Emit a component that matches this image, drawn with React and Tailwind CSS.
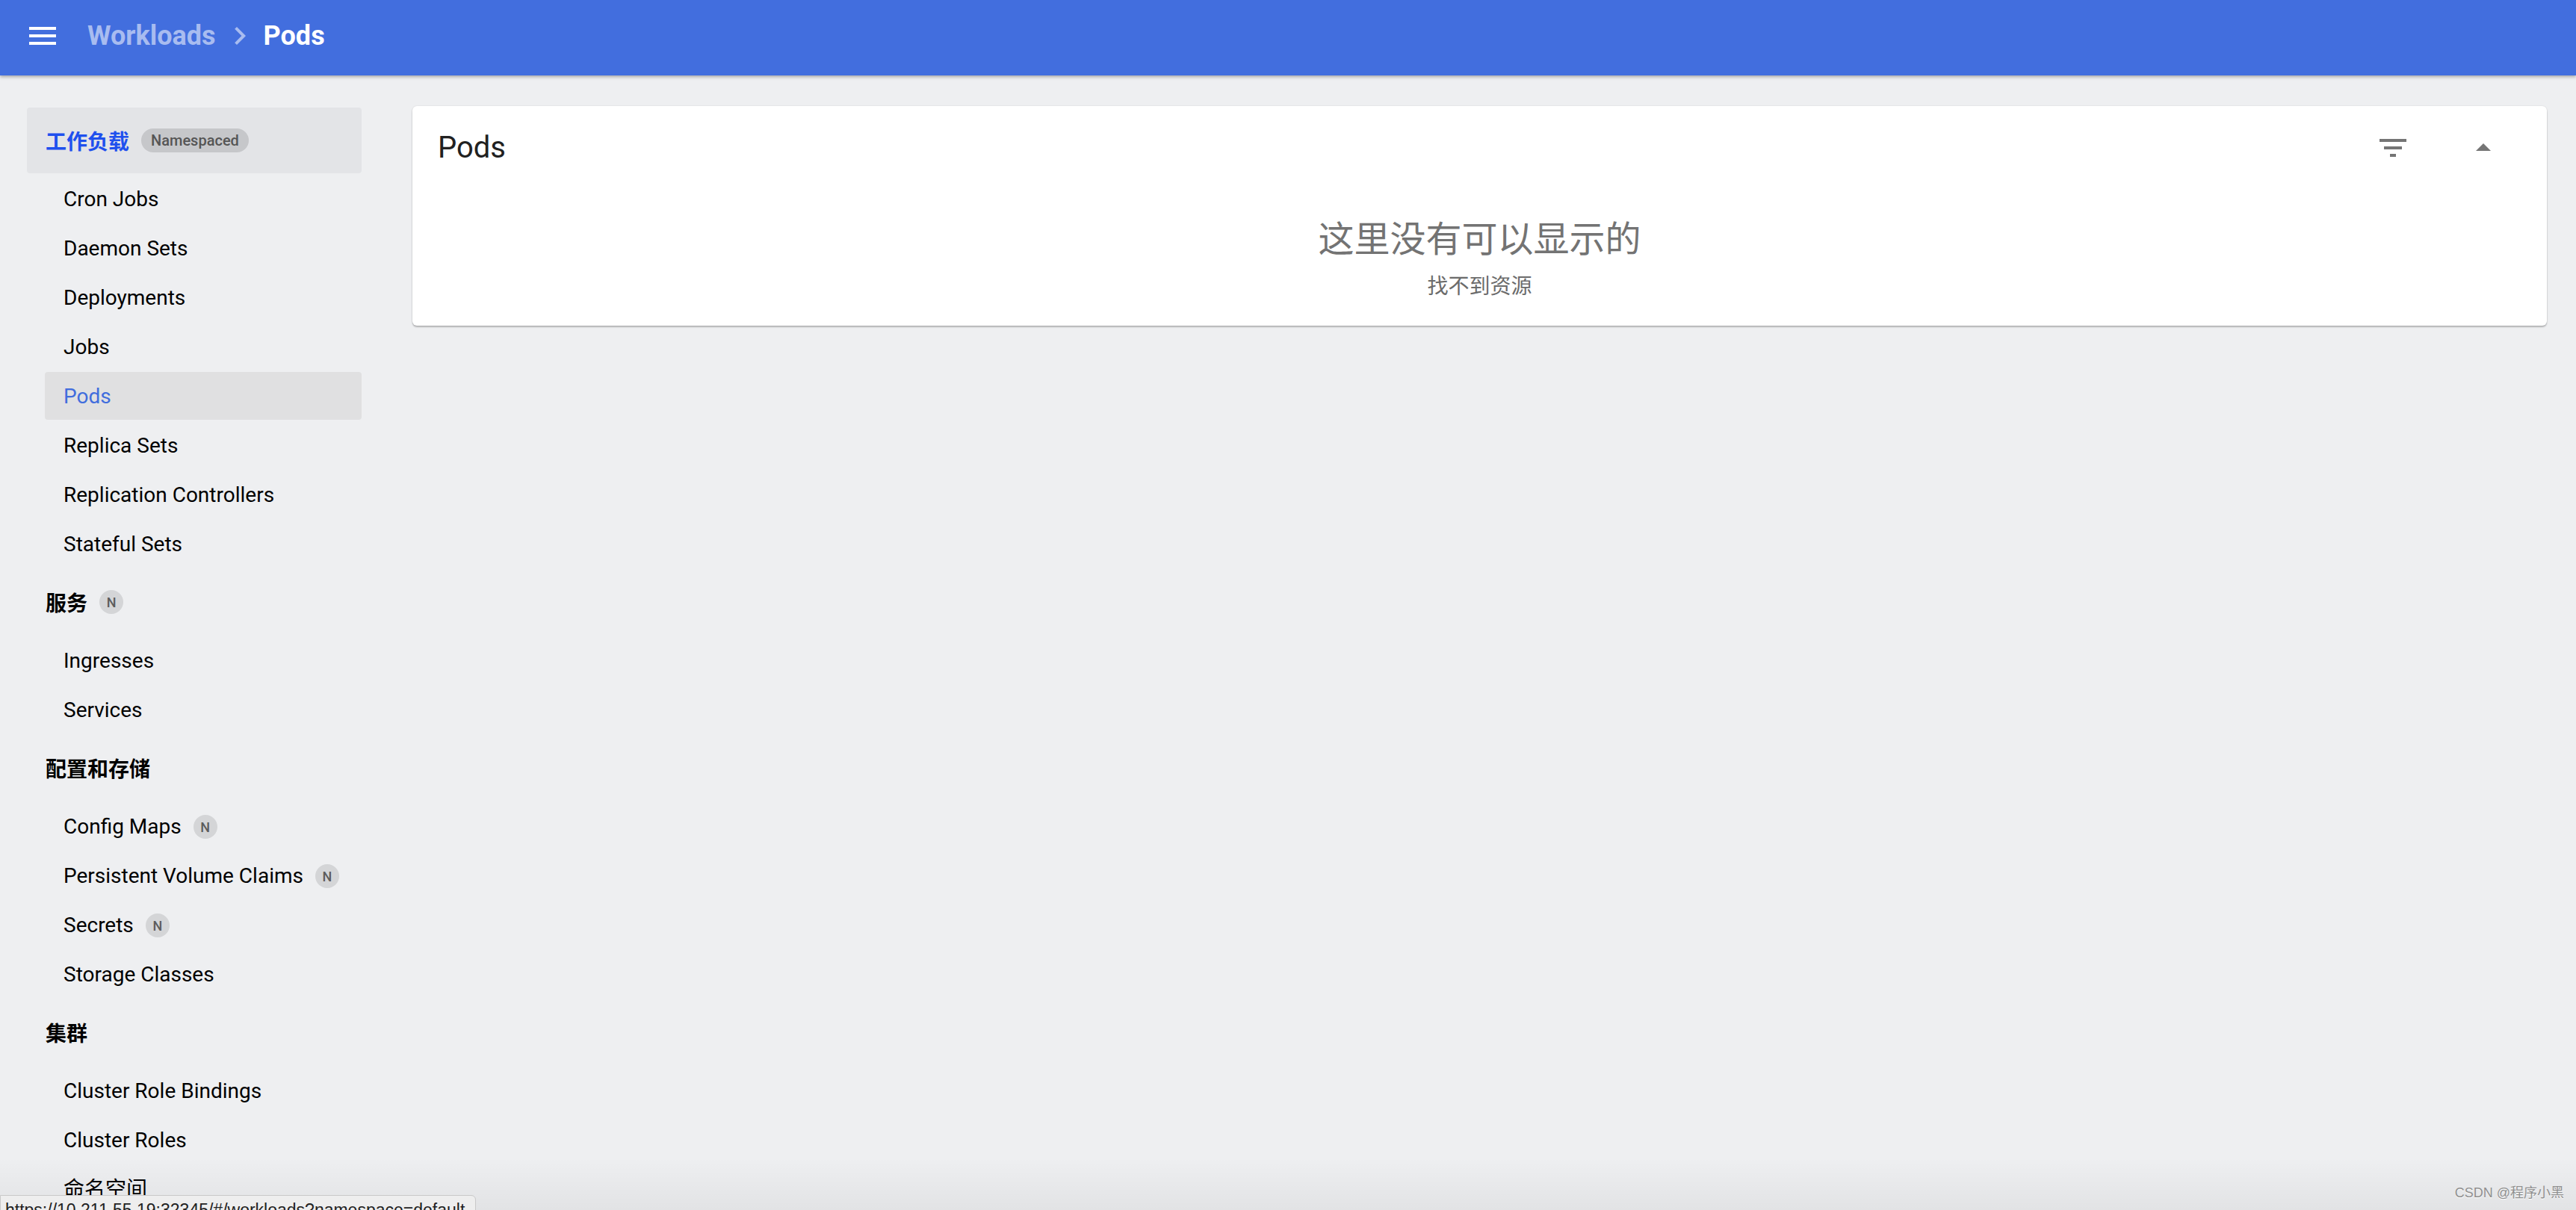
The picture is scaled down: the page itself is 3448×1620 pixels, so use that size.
import React from 'react';

const latin = { fontFamily: 'Roboto, "Noto Sans CJK SC", sans-serif' };
const cjk = { fontFamily: '"Noto Sans CJK SC", Roboto, sans-serif' };

const groups = [
	{
		title: '工作负载',
		badge: 'Namespaced',
		active: true,
		items: [
			{ name: 'Cron Jobs' },
			{ name: 'Daemon Sets' },
			{ name: 'Deployments' },
			{ name: 'Jobs' },
			{ name: 'Pods', selected: true },
			{ name: 'Replica Sets' },
			{ name: 'Replication Controllers' },
			{ name: 'Stateful Sets' },
		],
	},
	{
		title: '服务',
		badge: 'N',
		items: [ { name: 'Ingresses' }, { name: 'Services' } ],
	},
	{
		title: '配置和存储',
		items: [
			{ name: 'Config Maps', badge: true },
			{ name: 'Persistent Volume Claims', badge: true },
			{ name: 'Secrets', badge: true },
			{ name: 'Storage Classes' },
		],
	},
	{
		title: '集群',
		items: [
			{ name: 'Cluster Role Bindings' },
			{ name: 'Cluster Roles' },
			{ name: '命名空间' },
		],
	},
];

function Icon( { d, className } ) {
	return (
		<svg viewBox="0 0 24 24" className={ className } fill="currentColor">
			<path d={ d } />
		</svg>
	);
}

function NBadge() {
	return (
		<span
			className="ml-4 flex h-[32px] w-[32px] items-center justify-center rounded-full bg-[#d4d5d7] text-[18px] font-medium text-[#5c5c5c]"
			style={ latin }
		>
			N
		</span>
	);
}

function Sidebar() {
	return (
		<nav className="flex w-[516px] shrink-0 flex-col gap-[2px] pl-[36px] pr-[32px] pt-[43px]">
			{ groups.map( ( g ) => (
				<React.Fragment key={ g.title }>
					<div
						className={ `flex h-[88px] shrink-0 items-center rounded-[4px] pl-[25px] ${
							g.active ? 'bg-[#e3e4e7]' : ''
						}` }
					>
						<span
							className={ `text-[28px] font-bold ${
								g.active ? 'text-[#1f50ee]' : 'text-black'
							}` }
							style={ cjk }
						>
							{ g.title }
						</span>
						{ g.badge === 'Namespaced' && (
							<span
								className="ml-4 flex h-[32px] items-center rounded-full bg-[#c6c7ca] px-[13px] text-[20px] font-medium text-[#555555]"
								style={ latin }
							>
								Namespaced
							</span>
						) }
						{ g.badge === 'N' && <NBadge /> }
					</div>
					{ g.items.map( ( it ) => (
						<div
							key={ it.name }
							className={ `ml-[24px] flex h-[64px] shrink-0 items-center rounded-[4px] pl-[25px] pt-[2px] text-[28px] ${
								it.selected
									? 'bg-[#e0e0e1] text-[#416ddd]'
									: 'text-black'
							}` }
							style={ latin }
						>
							{ it.name }
							{ it.badge && <NBadge /> }
						</div>
					) ) }
				</React.Fragment>
			) ) }
		</nav>
	);
}

export default function App() {
	return (
		<div
			className="relative flex h-screen flex-col overflow-hidden bg-[#eeeff1]"
			style={ latin }
		>
			<header className="relative z-10 flex h-[101px] shrink-0 items-center bg-[#426ede] pb-[5px] pl-[33px] shadow-[0_2px_4px_rgba(0,0,0,0.3)]">
				<Icon
					d="M3 18h18v-2H3v2zm0-5h18v-2H3v2zm0-7v2h18V6H3z"
					className="h-[48px] w-[48px] text-white"
				/>
				<span className="ml-[36px] text-[36px] font-bold text-[#a8bcf0]">
					Workloads
				</span>
				<Icon
					d="M10 6L8.59 7.41 13.17 12l-4.58 4.59L10 18l6-6z"
					className="ml-[8px] h-[48px] w-[48px] text-[#a8bcf0]"
				/>
				<span className="ml-[8px] text-[36px] font-bold text-white">
					Pods
				</span>
			</header>

			<div className="flex min-h-0 flex-1">
				<Sidebar />
				<main className="flex-1 pl-[36px] pr-[39px] pt-[41px]">
					<section className="rounded-[6px] bg-white shadow-[0_2px_2px_rgba(0,0,0,0.24),0_0_2px_rgba(0,0,0,0.12)]">
						<div className="flex h-[112px] items-center pl-[34px] pr-[61px]">
							<h2 className="flex-1 text-[40px] font-normal text-[#212121]">
								Pods
							</h2>
							<Icon
								d="M10 18h4v-2h-4v2zM3 6v2h18V6H3zm3 7h12v-2H6v2z"
								className="h-[48px] w-[48px] text-[#757575]"
							/>
							<Icon
								d="M7 14l5-5 5 5z"
								className="ml-[73px] h-[48px] w-[48px] text-[#757575]"
							/>
						</div>
						<div
							className="flex flex-col items-center pb-[37px] pt-[34px]"
							style={ cjk }
						>
							<div className="text-[48px] leading-[56px] text-[#737373]">
								这里没有可以显示的
							</div>
							<div className="mt-[19px] text-[28px] leading-[36px] text-[#6b6b6b]">
								找不到资源
							</div>
						</div>
					</section>
				</main>
			</div>

			<div className="pointer-events-none absolute inset-x-0 bottom-0 h-[70px] bg-gradient-to-b from-transparent to-[rgba(0,0,0,0.05)]" />

			<div className="absolute bottom-[-20px] left-0 h-[40px] overflow-hidden whitespace-nowrap rounded-tr-[6px] border border-[#c9c9c9] bg-[#eeeeee] pl-[6px] pr-[14px] pt-[4px]">
				<span
					className="text-[23px] leading-[30px] text-[#222222]"
					style={ { fontFamily: '"Liberation Sans", Arial, sans-serif' } }
				>
					https://10.211.55.19:32345/#/workloads?namespace=default
				</span>
			</div>

			<div
				className="absolute bottom-[9px] right-[16px] text-[18px] text-[#8f8f8f] [text-shadow:0_1px_0_#ffffff]"
				style={ { fontFamily: '"Liberation Sans", "Noto Sans CJK SC", sans-serif' } }
			>
				CSDN @程序小黑
			</div>
		</div>
	);
}
